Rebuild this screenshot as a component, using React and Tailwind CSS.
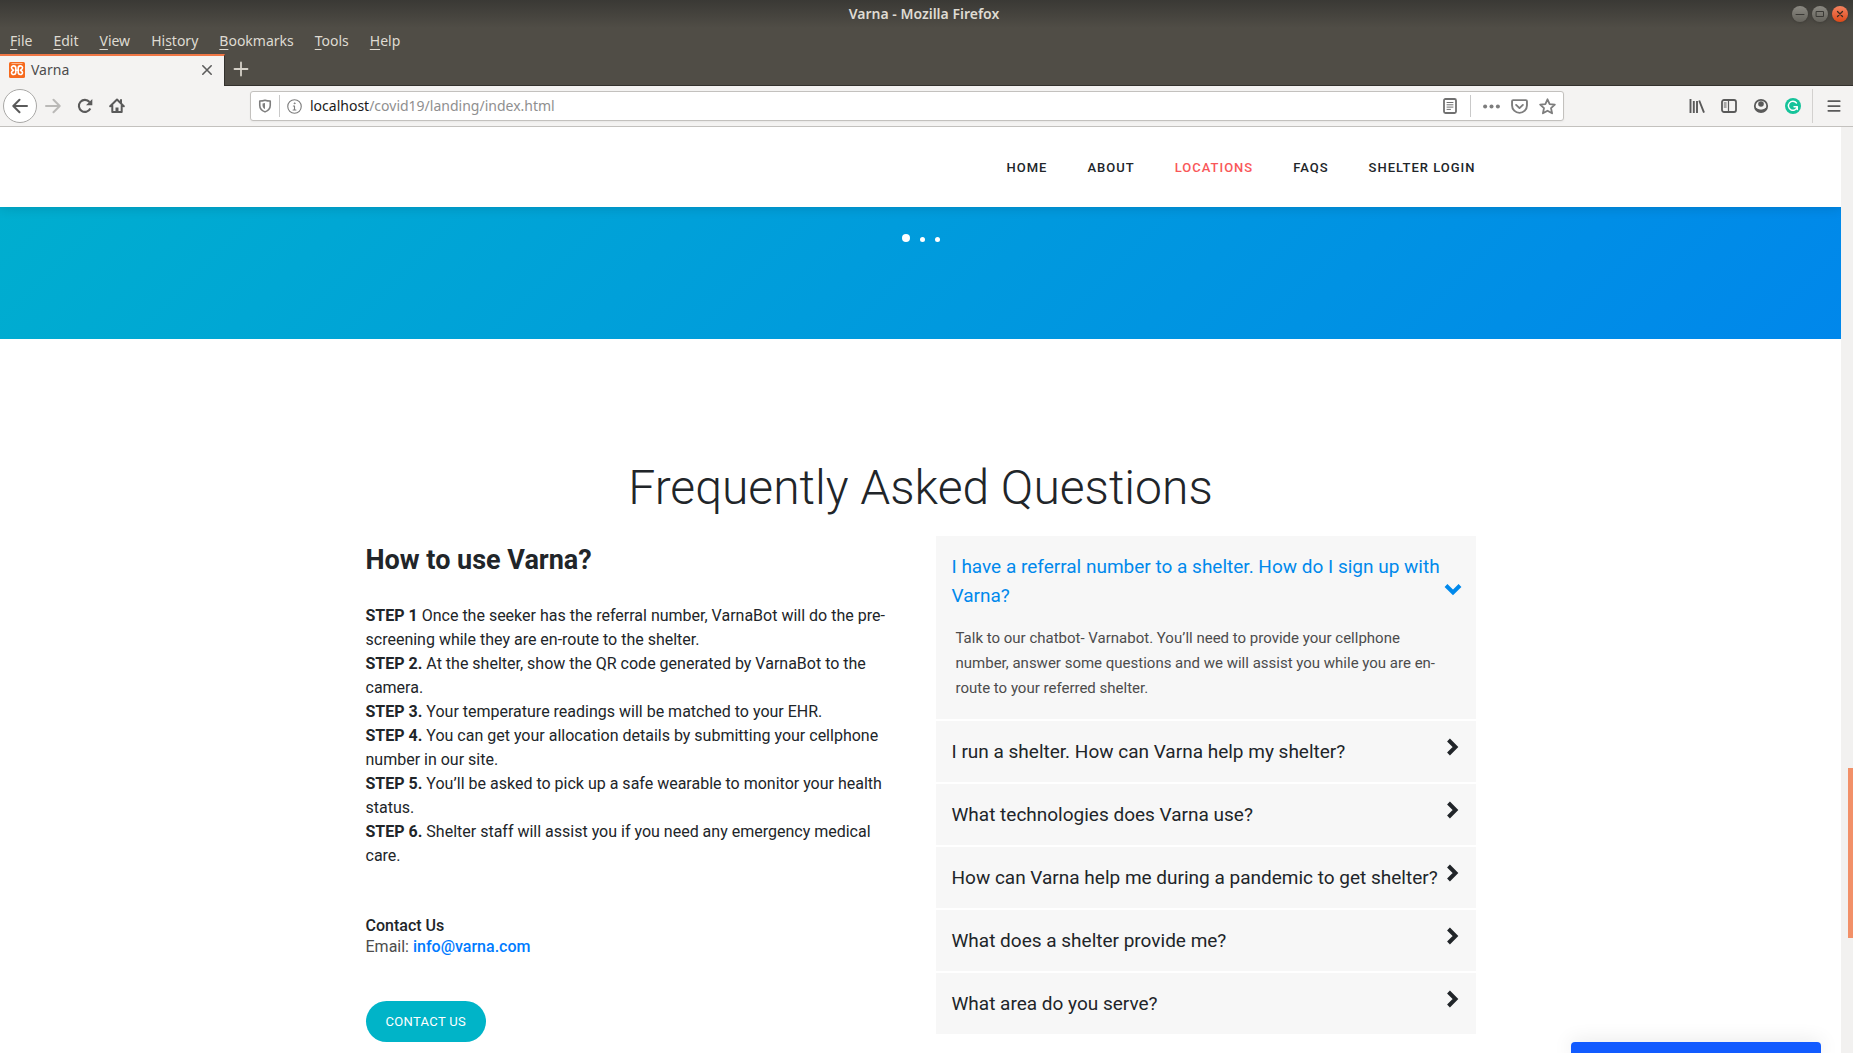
import React, { useState } from "react";

const MENUS = ["File", "Edit", "View", "History", "Bookmarks", "Tools", "Help"];
const MENU_KEYS = { History: 2 };

const NAV = ["Home", "About", "Locations", "FAQs", "Shelter Login"];

const STEPS = [
  ["STEP 1", "Once the seeker has the referral number, VarnaBot will do the pre-screening while they are en-route to the shelter."],
  ["STEP 2.", "At the shelter, show the QR code generated by VarnaBot to the camera."],
  ["STEP 3.", "Your temperature readings will be matched to your EHR."],
  ["STEP 4.", "You can get your allocation details by submitting your cellphone number in our site."],
  ["STEP 5.", "You’ll be asked to pick up a safe wearable to monitor your health status."],
  ["STEP 6.", "Shelter staff will assist you if you need any emergency medical care."],
];

const FAQS = [
  {
    q: "I have a referral number to a shelter. How do I sign up with Varna?",
    a: "Talk to our chatbot- Varnabot. You’ll need to provide your cellphone number, answer some questions and we will assist you while you are en-route to your referred shelter.",
  },
  { q: "I run a shelter. How can Varna help my shelter?" },
  { q: "What technologies does Varna use?" },
  { q: "How can Varna help me during a pandemic to get shelter?" },
  { q: "What does a shelter provide me?" },
  { q: "What area do you serve?" },
];

function Icon({ children, className = "size-4", ...rest }) {
  return (
    <svg viewBox="0 0 16 16" fill="none" stroke="currentColor" strokeWidth="2" strokeLinecap="round" strokeLinejoin="round" aria-hidden="true" className={className} {...rest}>
      {children}
    </svg>
  );
}

function TitleBar() {
  return (
    <div className="flex h-7 items-center bg-linear-to-b from-[#3a3935] to-[#504d46] pr-[5px]">
      <div className="flex-1" />
      <h1 className="text-sm font-semibold text-[#dfdbd2]">Varna - Mozilla Firefox</h1>
      <div className="flex flex-1 justify-end gap-1">
        <button aria-label="Minimize" className="grid size-4 place-items-center rounded-full bg-linear-to-b from-[#8b8982] to-[#65635c] text-[#3a3935] shadow-sm">
          <Icon strokeWidth="1"><path d="M4 8.5h8" /></Icon>
        </button>
        <button aria-label="Maximize" className="grid size-4 place-items-center rounded-full bg-linear-to-b from-[#8b8982] to-[#65635c] text-[#3a3935] shadow-sm">
          <Icon strokeWidth="1" strokeLinejoin="miter"><path d="M4.5 5.5h7v5h-7z" /></Icon>
        </button>
        <button aria-label="Close" className="grid size-4 place-items-center rounded-full bg-linear-to-b from-[#f4825e] to-[#dc4814] text-[#3a2a20] shadow-sm">
          <Icon strokeWidth="1.3"><path d="M5.5 5.5l5 5M10.5 5.5l-5 5" /></Icon>
        </button>
      </div>
    </div>
  );
}

function MenuBar() {
  return (
    <div className="flex h-[26px] items-center gap-[21px] px-2.5 text-sm text-[#dfdbd2]">
      {MENUS.map((m) => {
        const k = MENU_KEYS[m] ?? 0;
        return (
          <button key={m}>
            {m.slice(0, k)}
            <span className="underline underline-offset-3">{m[k]}</span>
            {m.slice(k + 1)}
          </button>
        );
      })}
    </div>
  );
}

function TabStrip() {
  return (
    <div className="flex h-8 border-b border-[#33312d]">
      <div className="-mb-px flex w-[225px] items-center border-t-2 border-r border-t-[#f07746] border-r-[#33312d] bg-[#f4f3f2] pr-[9px] pb-0.5 pl-[9px]">
        <svg viewBox="0 0 16 16" className="size-4" aria-hidden="true">
          <rect width="16" height="16" rx="1.5" fill="#f66a1e" />
          <rect x="2.5" y="1" width="11" height="1" fill="#fbb48a" />
          <g fill="none" stroke="#fff" strokeWidth="1.6" strokeLinejoin="round">
            <path d="M8 8.200H6.800V6.200C6.800 3.200 2.500 3.200 2.500 5.800C2.500 7.200 3.600 7.600 4.600 8.200C3.600 8.800 2.500 9.200 2.500 10.600C2.500 13.200 6.800 13.200 6.800 10.200V8.200" />
            <path d="M8 8.200H9.200V6.200C9.200 3.200 13.500 3.200 13.500 5.800C13.500 7.200 12.400 7.600 11.400 8.200C12.400 8.800 13.500 9.200 13.500 10.600C13.500 13.200 9.200 13.200 9.200 10.200V8.200" />
          </g>
        </svg>
        <span className="ml-1.5 flex-1 text-sm text-[#4c4c4c]">Varna</span>
        <button aria-label="Close tab" className="text-[#5c5c5c]">
          <Icon strokeWidth="1.6"><path d="M3.8 3.8l8.4 8.4M12.2 3.8l-8.4 8.4" /></Icon>
        </button>
      </div>
      <button aria-label="New tab" className="mb-0.5 ml-2 grid w-4 place-items-center text-[#d5d1c8]">
        <Icon strokeWidth="1.8"><path d="M8 1.5v13M1.5 8h13" /></Icon>
      </button>
    </div>
  );
}

function AddressBar() {
  return (
    <form className="flex h-[30px] min-w-0 flex-[1312] items-center rounded-[3px] border border-[#c3c1be] bg-white px-[7px] text-[#7d7d7d] shadow-xs" onSubmit={(e) => e.preventDefault()}>
      <Icon strokeWidth="1.8" className="size-3.5 shrink-0"><path d="M8 1.3C6 2 4 2.3 2 2.3V7c0 4 2.6 6.300 6 7.700 3.400-1.400 6-3.700 6-7.700V2.300C12 2.300 10 2 8 1.300Z" /><path d="M8 4.500v7C6 10.300 5.200 9 5.200 7V5Z" fill="currentColor" stroke="none" /></Icon>
      <span className="mx-[7px] h-[22px] w-px shrink-0 bg-[#c9c9c9]" />
      <Icon strokeWidth="1.2" className="size-[15px] shrink-0"><circle cx="8" cy="8" r="7.2" /><circle cx="8" cy="4.6" r="0.5" strokeWidth="1" /><path d="M6.800 7.500H8v4M6.500 11.700h3" /></Icon>
      <div className="relative ml-2 flex-1 text-sm">
        <input aria-label="Address" defaultValue="localhost/covid19/landing/index.html" className="block w-full bg-transparent text-transparent outline-none" />
        <div aria-hidden="true" className="pointer-events-none absolute inset-0 text-[#8f8f8f]">
          <span className="text-[#1a1a1a]">localhost</span>/covid19/landing/index.html
        </div>
      </div>
      <button type="button" aria-label="Reader view" className="text-[#707070]">
        <Icon><rect x="2" y="1" width="12" height="14" rx="1.5" strokeWidth="1.8" /><path d="M5 4.500h6M5 6.800h6M5 9.100h6M5 11.400h3.500" strokeWidth="1" /></Icon>
      </button>
      <span className="mx-3 h-[22px] w-px bg-[#c9c9c9]" />
      <button type="button" aria-label="Page actions">
        <Icon className="size-[17px]"><g fill="currentColor" stroke="none"><circle cx="2" cy="8" r="1.9" /><circle cx="8" cy="8" r="1.9" /><circle cx="14" cy="8" r="1.9" /></g></Icon>
      </button>
      <button type="button" aria-label="Save to Pocket" className="ml-[11px]">
        <Icon className="size-[17px]" strokeWidth="1.8"><path d="M2 2h12a1 1 0 0 1 1 1v4a7 7 0 0 1-14 0V3a1 1 0 0 1 1-1Z" /><path d="M4.800 6.500L8 9.500l3.200-3" /></Icon>
      </button>
      <button type="button" aria-label="Bookmark this page" className="ml-[11px]">
        <Icon className="size-[17px]" strokeWidth="1.7"><path d="M8 1.200l2 4.500 4.900.5-3.600 3.300 1 4.900L8 12l-4.300 2.400 1-4.900L1.100 6.200 6 5.700Z" /></Icon>
      </button>
    </form>
  );
}

function ToolBar() {
  return (
    <div className="flex h-[41px] items-center border-b border-[#c3c1be] bg-[#f4f3f2] text-[#5a5a5a]">
      <div className="flex w-[250px] items-center pl-[3px]">
        <button aria-label="Back" className="grid size-[34px] place-items-center rounded-full border border-[#a9a8a6] bg-white">
          <Icon><path d="M15 8H1.500M7.500 1.800L1.300 8l6.200 6.200" /></Icon>
        </button>
        <button aria-label="Forward" disabled className="ml-2 text-[#bab9b7]">
          <Icon><path d="M1 8h13.500M8.500 1.800L14.700 8l-6.200 6.200" /></Icon>
        </button>
        <button aria-label="Reload" className="ml-4">
          <Icon><path d="M13.300 10.500A6 6 0 1 1 12.500 4" strokeLinecap="butt" strokeWidth="2.1" /><path d="M15.300 1v6.200H9Z" fill="currentColor" stroke="none" /></Icon>
        </button>
        <button aria-label="Home" className="ml-4">
          <Icon><path d="M1.200 8.200L8 1.500l6.800 6.700M3.300 7.500V14h9.400V7.500" /><path d="M6.500 15V9.500h3V15Z" fill="currentColor" stroke="none" /><path d="M12 2v3" /></Icon>
        </button>
      </div>
      <AddressBar />
      <div className="flex flex-[239] items-center justify-end gap-4">
        <button aria-label="Library">
          <Icon strokeWidth="1.9" strokeLinecap="butt"><path d="M1.500 1v14M4.800 3v12M8 3v12M10.200 2.500L15 14.600" /></Icon>
        </button>
        <button aria-label="Sidebars">
          <Icon strokeWidth="1.8"><rect x="1" y="2" width="14" height="12" rx="2" /><path d="M7.500 2v12" strokeWidth="1.2" /><path d="M3.200 5h2M3.200 7h2M3.200 9h2" strokeWidth="1" /></Icon>
        </button>
        <button aria-label="Account">
          <Icon><circle cx="8" cy="8" r="6.200" strokeWidth="1.8" /><circle cx="8" cy="6" r="2.800" fill="currentColor" stroke="none" /><path d="M2.200 8.500C3.500 12 12.500 12 13.800 8.500V11L11 14H5L2.200 11Z" fill="currentColor" stroke="none" /><path d="M4.500 9.400c2 1.800 5 1.800 7 0" stroke="#f4f3f2" strokeWidth="1.3" /></Icon>
        </button>
        <button aria-label="Grammarly">
          <Icon><circle cx="8" cy="8" r="8" fill="#15c39a" stroke="none" /><path d="M11.500 5A4.500 4.500 0 1 0 12.300 8.800H9M12.300 8.800v2.700" stroke="#fff" strokeWidth="1.4" /></Icon>
        </button>
      </div>
      <span className="ml-[11px] h-[34px] w-px bg-[#d3d1cf]" />
      <button aria-label="Open menu" className="mr-3 ml-[14px]">
        <Icon className="size-[14px]"><path d="M1.500 2.500h13M1.500 8h13M1.500 13.500h13" /></Icon>
      </button>
    </div>
  );
}

function SiteHeader() {
  return (
    <header className="relative h-20 shrink-0 bg-white shadow-[0_0_12px_rgba(0,0,0,0.16)]">
      <nav className="mx-auto flex h-full max-w-[1140px] items-center justify-end gap-10 px-[15px] pt-0.5 text-[13px] font-medium tracking-[1px] text-[#212529] uppercase">
        {NAV.map((n) => (
          <a key={n} href="#" className={n === "Locations" ? "text-[#f95759]" : ""}>
            {n}
          </a>
        ))}
      </nav>
    </header>
  );
}

function HowTo() {
  return (
    <div>
      <h3 className="mt-1 text-[27px] leading-10 font-bold">How to use Varna?</h3>
      <div className="mt-6 text-base leading-6">
        {STEPS.map(([label, text]) => (
          <p key={label}>
            <strong>{label}</strong> {text}
          </p>
        ))}
      </div>
      <div className="mt-[47px] text-base leading-[21px]">
        <p className="font-medium">Contact Us</p>
        <p className="text-[#4c4c4c]">
          Email: <a href="mailto:info@varna.com" className="font-medium text-[#007bff]">info@varna.com</a>
        </p>
      </div>
      <button className="mt-11 h-[41px] rounded-full bg-[#00b4c8] px-5 text-[13px] tracking-wide text-white uppercase">Contact Us</button>
    </div>
  );
}

function Faq() {
  const [open, setOpen] = useState(0);
  return (
    <div className="flex flex-col gap-0.5">
      {FAQS.map(({ q, a }, i) => {
        const active = open === i;
        return (
          <div key={q} className="bg-[#f7f7f7]">
            <button
              aria-expanded={active}
              onClick={() => setOpen(active ? -1 : i)}
              className={active ? "flex w-full items-center px-4 pt-4 text-left text-[19px] leading-[29px] text-[#0089ec]" : "flex w-full items-center px-4 py-4 text-left text-[19px] leading-[29px] text-[#212529]"}
            >
              <span className="flex-1">{q}</span>
              {active ? (
                <svg viewBox="0 0 18 18" className="mt-4 -mr-0.5 size-[18px] shrink-0" fill="none" stroke="currentColor" strokeWidth="4" aria-hidden="true"><path d="M2 5.500l7 7 7-7" /></svg>
              ) : (
                <svg viewBox="0 0 18 18" className="-mr-0.5 mb-2.5 size-[18px] shrink-0" fill="none" stroke="currentColor" strokeWidth="4" aria-hidden="true"><path d="M4.500 2l7 7-7 7" /></svg>
              )}
            </button>
            {active && a && <p className="px-5 pt-4 pb-[18px] text-[15px] leading-[25px] text-[#4c4c4c]">{a}</p>}
          </div>
        );
      })}
    </div>
  );
}

export default function App() {
  return (
    <div className="flex h-screen flex-col overflow-hidden bg-[#504d46] font-['Noto_Sans',sans-serif]">
      <TitleBar />
      <MenuBar />
      <TabStrip />
      <ToolBar />
      <div className="flex min-h-0 flex-1">
        <main className="relative flex min-w-0 flex-1 flex-col overflow-hidden bg-white font-[Roboto,sans-serif] text-[#212529]">
          <SiteHeader />
          <div className="flex h-33 shrink-0 items-start justify-center gap-2.5 bg-linear-[135deg,#00aecf,#0087eb] pt-[27px]">
            <button aria-label="Slide 1" className="size-2 rounded-full bg-white" />
            <button aria-label="Slide 2" className="mt-[3px] size-[5px] rounded-full bg-white" />
            <button aria-label="Slide 3" className="mt-[3px] size-[5px] rounded-full bg-white" />
          </div>
          <section className="mx-auto w-full max-w-[1140px] px-[15px] pt-30">
            <h2 className="text-center text-5xl leading-[58px] font-light">Frequently Asked Questions</h2>
            <div className="mt-[19px] grid grid-cols-2 gap-[30px]">
              <HowTo />
              <Faq />
            </div>
          </section>
          <div className="absolute right-5 bottom-0 h-[11px] w-[250px] rounded-t bg-[#125bff] shadow-[0_0_20px_rgba(0,0,0,0.12)]" />
        </main>
        <div className="flex w-3 flex-col items-end bg-[#f2f1f0]">
          <div className="flex-[641]" />
          <div className="w-[5px] flex-[170] bg-[#f29068]" />
          <div className="flex-[115]" />
        </div>
      </div>
    </div>
  );
}
